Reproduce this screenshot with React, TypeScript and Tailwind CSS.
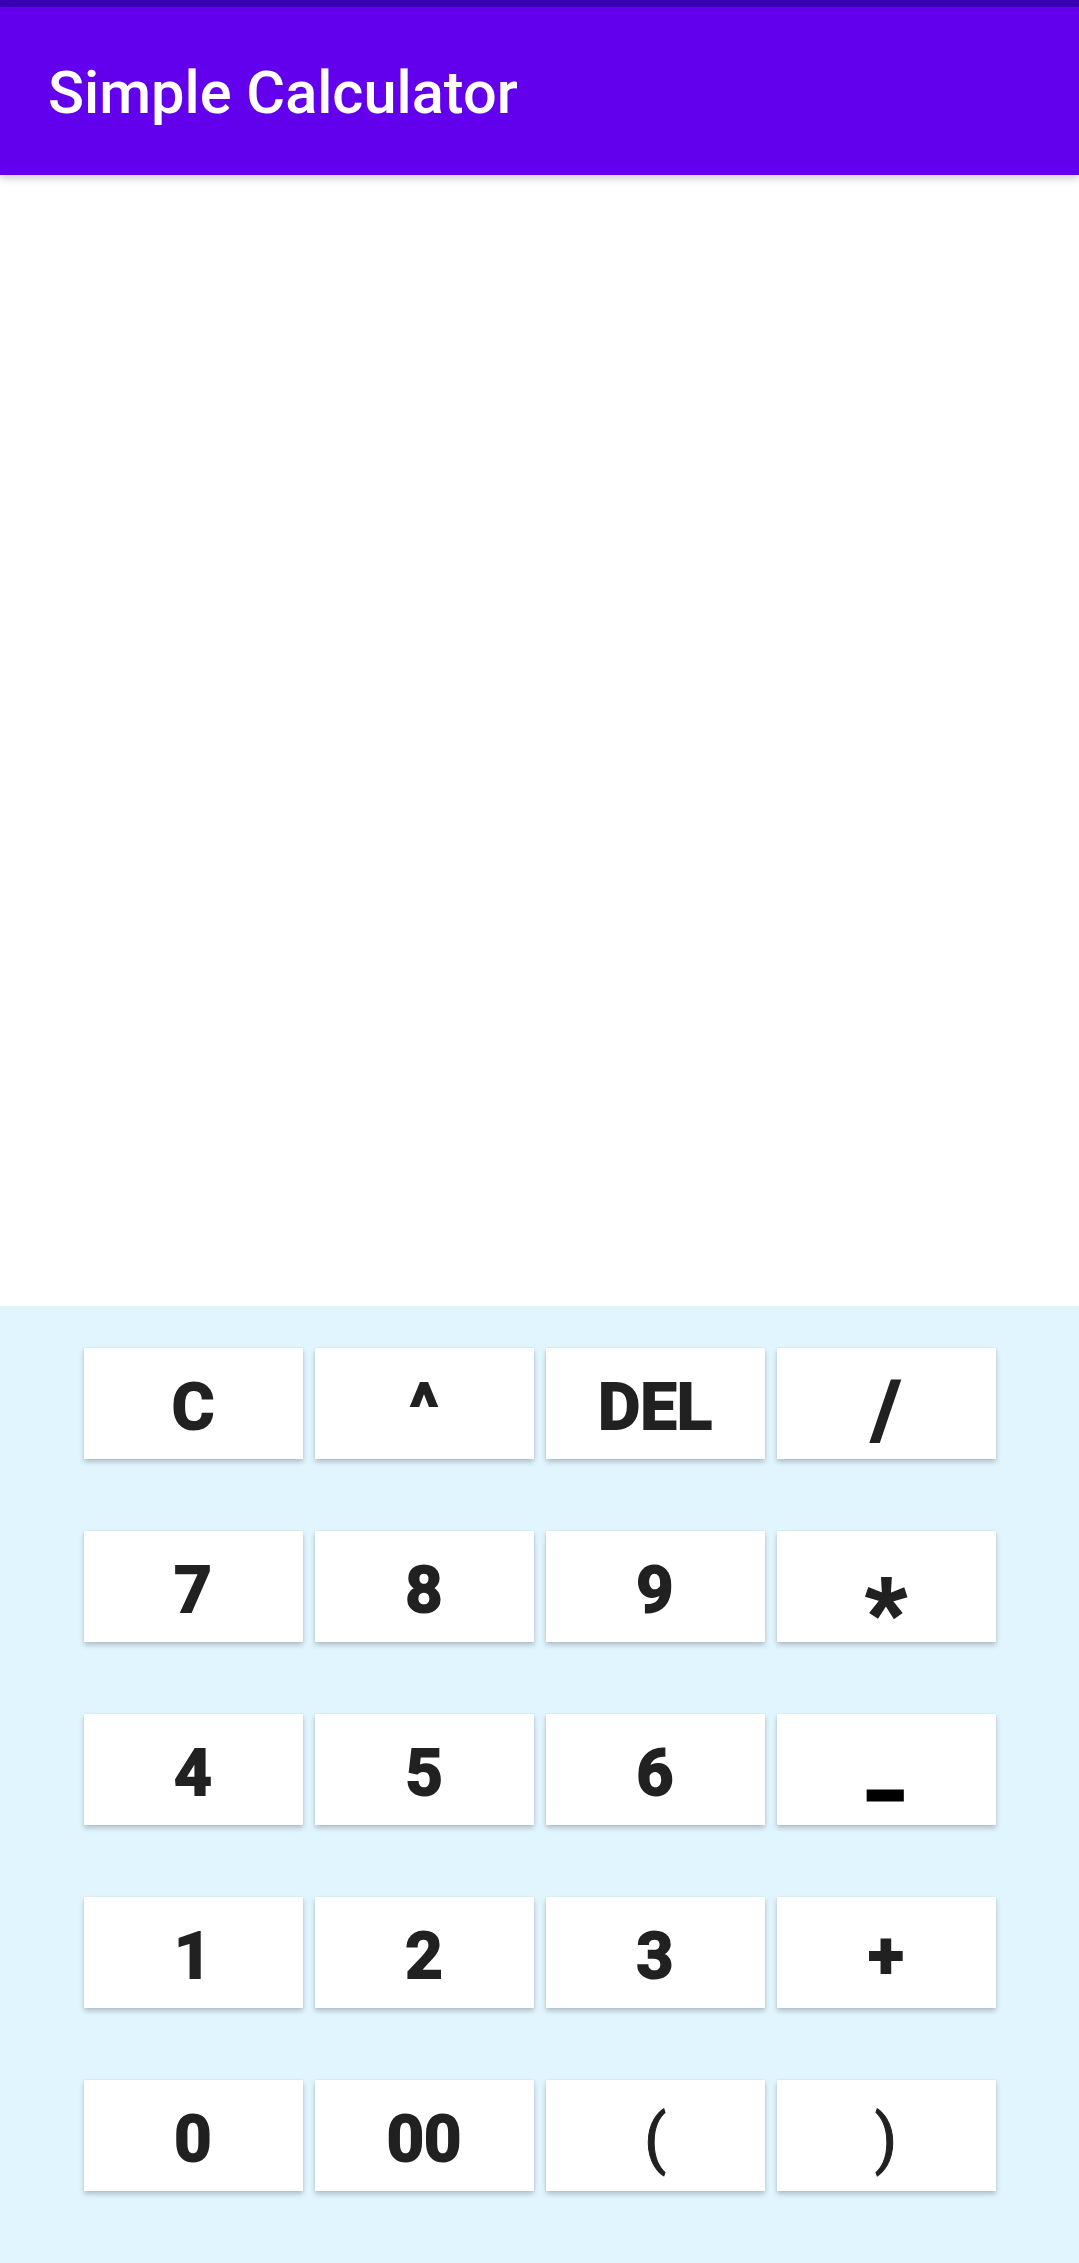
const keys: string[][] = [
  ['C', '^', 'DEL', '/'],
  ['7', '8', '9', '*'],
  ['4', '5', '6', '-'],
  ['1', '2', '3', '+'],
  ['0', '00', '(', ')'],
];

const KeyLabel = ({ label }: { label: string }) => {
  if (label === '*') {
    return <span className="text-[92px] leading-none translate-y-[22px] text-[#212121]">*</span>;
  }
  if (label === '/') {
    return <span className="text-[80px] leading-none translate-y-[2px] text-[#212121]">/</span>;
  }
  if (label === '-') {
    return (
      <span className="text-[100px] leading-none translate-y-[18px] scale-x-[1.3] text-black [-webkit-text-stroke:1px_#000]">
        -
      </span>
    );
  }
  if (label === '(' || label === ')') {
    return <span className="font-normal text-[#212121] [-webkit-text-stroke:1px_#212121]">{label}</span>;
  }
  return <span className="text-[#212121]">{label}</span>;
};

const App = () => {
  return (
    <div className="h-screen flex flex-col bg-white font-['Roboto','Liberation_Sans',sans-serif]">
      <div className="h-[7px] bg-[#3700B3]" />
      <header className="relative z-10 h-[168px] bg-[#6200EE] flex items-center pl-[48px] pt-[6px] shadow-[0_3px_8px_rgba(0,0,0,0.22)]">
        <h1 className="text-white text-[59.5px] font-medium">Simple Calculator</h1>
      </header>

      <div className="flex-1" />

      <div className="bg-[#E1F5FE] pt-[42px] pb-[72px]">
        <div className="grid grid-cols-[repeat(4,219px)] justify-center gap-x-[12px] gap-y-[72px]">
          {keys.flat().map((k) => (
            <button
              key={k}
              className="h-[111px] bg-white flex items-center justify-center pt-[8px] text-[65px] font-bold [-webkit-text-stroke:2px_#212121] shadow-[0_3px_5px_rgba(0,0,0,0.22),0_0_1px_rgba(0,0,0,0.12)]"
            >
              <KeyLabel label={k} />
            </button>
          ))}
        </div>
      </div>
    </div>
  );
};

export default App;
